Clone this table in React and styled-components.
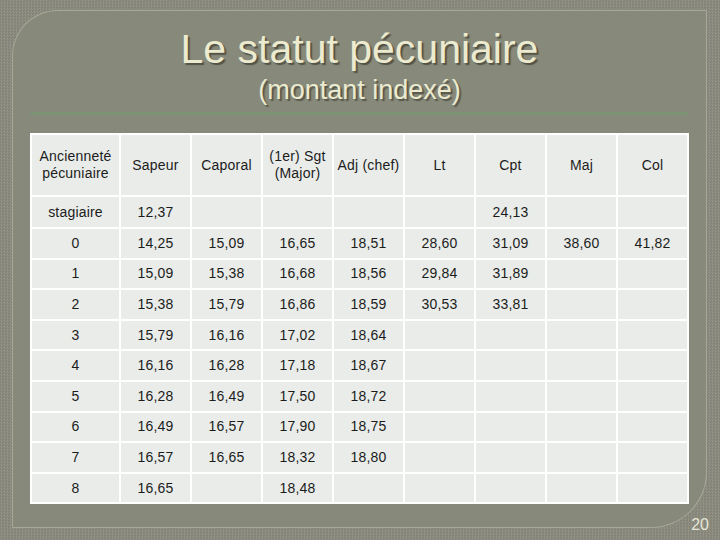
import React from 'react';
import styled, { createGlobalStyle } from 'styled-components';

const GlobalStyle = createGlobalStyle`
  html, body {
    margin: 0;
    padding: 0;
  }
  body {
    width: 720px;
    height: 540px;
    overflow: hidden;
    font-family: "Liberation Sans", Arial, sans-serif;
    background: repeating-conic-gradient(#909184 0 25%, #828376 0 50%) 0 0 / 3px 3px;
  }
`;

// Slide panel with the two rounded corners
const Slide = styled.div`
  position: relative;
  box-sizing: border-box;
  margin: 10px 0 0 12px;
  width: 695px;
  height: 518px;
  border: 1px solid rgba(225, 225, 205, 0.35);
  border-radius: 46px 0 56px 0;
  background: #87897a;
  padding-top: 15px;
  display: flex;
  flex-direction: column;
  align-items: center;
`;

const Title = styled.h1`
  margin: 0;
  font-weight: normal;
  font-size: 41px;
  line-height: 46px;
  color: #ecebd0;
  text-shadow: 2px 2px 1px rgba(40, 40, 30, 0.55);
`;

const Subtitle = styled.h2`
  margin: 3px 0 0;
  font-weight: normal;
  font-size: 27px;
  line-height: 31px;
  color: #ecebd0;
  text-shadow: 2px 2px 1px rgba(40, 40, 30, 0.5);
`;

const Rule = styled.div`
  margin-top: 6px;
  width: 657px;
  height: 3px;
  background: #7b9475;
`;

const Table = styled.table`
  margin-top: 18px;
  width: 657px;
  table-layout: fixed;
  border-collapse: collapse;
  font-size: 14px;
  letter-spacing: 0.2px;
  color: #1c1c1c;
`;

const Cell = styled.td`
  padding: 0;
  height: ${(p) => p.$h}px;
  border: 2px solid #fff;
  background: #e9ece9;
  text-align: center;
  vertical-align: middle;
  line-height: 17px;
  white-space: pre-line;
`;

const PageNumber = styled.span`
  position: absolute;
  right: -3px;
  bottom: -7px;
  font-size: 16px;
  color: #e6e6d6;
`;

const headers = [
  'Ancienneté\npécuniaire', 'Sapeur', 'Caporal', '(1er) Sgt\n(Major)',
  'Adj (chef)', 'Lt', 'Cpt', 'Maj', 'Col',
];

const rows = [
  ['stagiaire', '12,37', '', '', '', '', '24,13', '', ''],
  ['0', '14,25', '15,09', '16,65', '18,51', '28,60', '31,09', '38,60', '41,82'],
  ['1', '15,09', '15,38', '16,68', '18,56', '29,84', '31,89', '', ''],
  ['2', '15,38', '15,79', '16,86', '18,59', '30,53', '33,81', '', ''],
  ['3', '15,79', '16,16', '17,02', '18,64', '', '', '', ''],
  ['4', '16,16', '16,28', '17,18', '18,67', '', '', '', ''],
  ['5', '16,28', '16,49', '17,50', '18,72', '', '', '', ''],
  ['6', '16,49', '16,57', '17,90', '18,75', '', '', '', ''],
  ['7', '16,57', '16,65', '18,32', '18,80', '', '', '', ''],
  ['8', '16,65', '', '18,48', '', '', '', '', ''],
];

const App = () => (
  <>
    <GlobalStyle />
    <Slide>
      <Title>Le statut pécuniaire</Title>
      <Subtitle>(montant indexé)</Subtitle>
      <Rule />
      <Table>
        <colgroup>
          <col style={{ width: 89 }} />
          {headers.slice(1).map((h) => (
            <col key={h} style={{ width: 71 }} />
          ))}
        </colgroup>
        <tbody>
          <tr>
            {headers.map((h) => (
              <Cell key={h} $h={60}>{h}</Cell>
            ))}
          </tr>
          {rows.map((row, i) => (
            <tr key={row[0]}>
              {row.map((v, j) => (
                <Cell key={j} $h={i === 0 ? 30 : 28.6}>{v}</Cell>
              ))}
            </tr>
          ))}
        </tbody>
      </Table>
      <PageNumber>20</PageNumber>
    </Slide>
  </>
);

export default App;
